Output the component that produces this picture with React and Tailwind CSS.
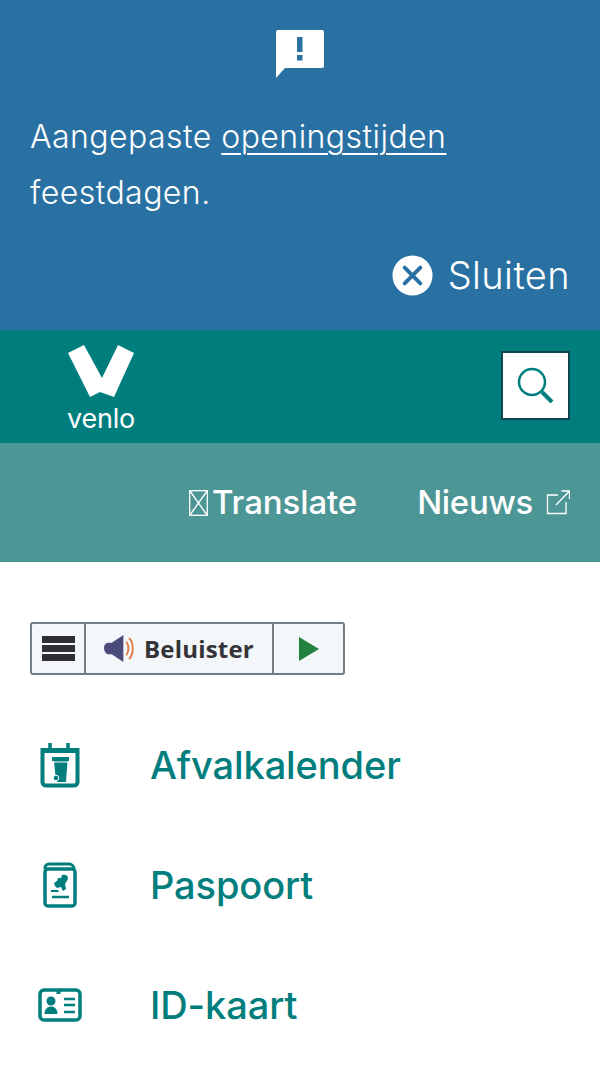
const FONT = "font-['Inter','Liberation_Sans',sans-serif]";

function AlertIcon() {
  return (
    <svg viewBox="0 0 50 50" className="w-[50px] h-[50px]" fill="none">
      <path d="M3 1H47a2 2 0 0 1 2 2V37a2 2 0 0 1-2 2H10L1 49V3a2 2 0 0 1 2-2Z" fill="#fff" />
      <rect x="22" y="8" width="5.500" height="15" fill="#2a71a3" />
      <rect x="22" y="26" width="5.500" height="5.500" fill="#2a71a3" />
    </svg>
  );
}

function CloseIcon() {
  return (
    <svg viewBox="0 0 42 42" className="w-[41px] h-[41px]">
      <circle cx="21" cy="21" r="20.500" fill="#fff" />
      <path d="M13 13 29 29M29 13 13 29" stroke="#2a71a3" strokeWidth="4" strokeLinecap="round" />
    </svg>
  );
}

function VenloLogo() {
  return (
    <svg viewBox="0 0 68 53" className="w-[68px] h-[53px]">
      <path d="M1 8 17 0 35 33 51 0 67 8 47 52 33 47 23 52Z" fill="#fff" />
    </svg>
  );
}

function SearchIcon() {
  return (
    <svg viewBox="0 0 40 40" className="w-[40px] h-[40px]" fill="none" stroke="#007e7e">
      <circle cx="16" cy="16" r="13" strokeWidth="2.500" />
      <path d="M26 26 36 36" strokeWidth="4" />
    </svg>
  );
}

function ExternalIcon() {
  return (
    <svg viewBox="0 0 24 25" className="w-[24px] h-[25px]" fill="none" stroke="#fff" strokeWidth="1.300">
      <path d="M12 5H1.500V23.500H20V12" />
      <path d="M10 15 23 1.500M15.500 1H23.500V9" />
    </svg>
  );
}

function TofuBox() {
  return (
    <svg viewBox="0 0 19 26" className="w-[19px] h-[26px] shrink-0" fill="none" stroke="#fff" strokeWidth="1.300">
      <rect x="0.700" y="0.700" width="17.600" height="24.600" />
      <path d="M1 1 18 25M18 1 1 25" />
    </svg>
  );
}

function CalendarIcon() {
  return (
    <svg viewBox="0 0 40 46" className="w-[40px] h-[46px]" fill="none">
      <path d="M2.500 8H37.500V40a3.500 3.500 0 0 1-3.500 3.500H6A3.500 3.500 0 0 1 2.500 40Z" stroke="#007e7e" strokeWidth="4" />
      <path d="M1 6H39V11H1Z" fill="#007e7e" />
      <path d="M10 1V9M28 1V9" stroke="#007e7e" strokeWidth="3.500" />
      <path d="M12 15H29V19H27.500L26 40H17L15.500 34 14 19H12Z" fill="#007e7e" />
      <path d="M13 20H28" stroke="#fff" strokeWidth="1" />
      <circle cx="16" cy="36" r="2.800" fill="#007e7e" stroke="#fff" strokeWidth="1" />
    </svg>
  );
}

function PassportIcon() {
  return (
    <svg viewBox="0 0 34 46" className="w-[34px] h-[46px]" fill="none">
      <path d="M2 7V6a4 4 0 0 1 4-4H26a5 5 0 0 1 5 5" stroke="#007e7e" strokeWidth="3" />
      <rect x="2" y="7" width="30" height="37" rx="3" stroke="#007e7e" strokeWidth="3.500" />
      <path d="M19 13c3-1 6 0 6 3 0 2-2 4-3 6l1 5-3 2-2-4-4 1-2-2-1-3 3-2 1-3 3 0Z" fill="#007e7e" />
      <path d="M8 28l7 0 1 2-8 0Z" fill="#007e7e" />
      <path d="M9 35H26" stroke="#007e7e" strokeWidth="2.500" />
    </svg>
  );
}

function IdCardIcon() {
  return (
    <svg viewBox="0 0 44 34" className="w-[44px] h-[34px]" fill="none">
      <rect x="2" y="2" width="40" height="30" rx="4" stroke="#007e7e" strokeWidth="3.500" />
      <path d="M18.500 2H22.500V6H18.500Z" fill="#007e7e" />
      <circle cx="13" cy="13" r="4.500" fill="#007e7e" />
      <path d="M6.500 26c0-5 3-7.500 6.500-7.500s6.500 2.500 6.500 7.500Z" fill="#007e7e" />
      <path d="M26 11H37M26 17H37M26 24H37" stroke="#007e7e" strokeWidth="2.500" />
    </svg>
  );
}

function SpeakerIcon() {
  return (
    <svg viewBox="0 0 34 30" className="w-[33px] h-[29px]" fill="none">
      <path d="M1 14c0-3 2-5 5-5h3L21 1V29L9 21H6c-3 0-5-3-5-7Z" fill="#4a4b78" />
      <path d="M24 8c3 4 3 10 0 14" stroke="#e07b45" strokeWidth="2" />
      <path d="M27 4c5 6 5 16 0 22" stroke="#e07b45" strokeWidth="2" />
    </svg>
  );
}

const links = [
  { label: "Afvalkalender", icon: <CalendarIcon /> },
  { label: "Paspoort", icon: <PassportIcon /> },
  { label: "ID-kaart", icon: <IdCardIcon /> },
];

export default function App() {
  return (
    <div className={`${FONT} w-[600px] h-[1065px] overflow-hidden bg-white`}>
      {/* Melding */}
      <div className="h-[330px] bg-[#2a71a3] px-[30px] pt-[29px] text-white">
        <div className="flex justify-center"><AlertIcon /></div>
        <p className="mt-[30px] text-[32px] leading-[56px] font-light tracking-[0.45px]">
          Aangepaste <a className="underline underline-offset-[5px] decoration-2">openingstijden</a>
          <br />
          feestdagen.
        </p>
        <div className="mt-[32px] flex items-center justify-end gap-[15px]">
          <CloseIcon />
          <span className="text-[38px] leading-[44px] font-light tracking-[0.4px]">Sluiten</span>
        </div>
      </div>

      {/* Header */}
      <div className="h-[113px] bg-[#007e7e] flex items-start justify-between pl-[67px] pr-[30px] pt-[15px]">
        <div className="flex flex-col items-center gap-[7px]">
          <VenloLogo />
          <span className="text-[27px] leading-[28px] text-white tracking-[-0.2px]">venlo</span>
        </div>
        <button className="w-[69px] h-[69px] mt-[6px] bg-white border-2 border-[#10474f] flex items-center justify-center">
          <SearchIcon />
        </button>
      </div>

      {/* Subnav */}
      <div className="h-[119px] bg-[#4d9696] flex items-center justify-end gap-[60px] pr-[30px] text-white text-[33px] font-medium">
        <span className="flex items-center tracking-[-0.1px]"><TofuBox /><span className="ml-[4px]">Translate</span></span>
        <span className="flex items-center gap-[13px] tracking-[-0.3px]">Nieuws <ExternalIcon /></span>
      </div>

      {/* Voorlezen */}
      <div className="pt-[60px] px-[30px]">
        <div className="inline-flex h-[53px] border-2 border-[#717c85] rounded-[3px] bg-[#f3f7fa] font-['Open_Sans',sans-serif]">
          <div className="w-[54px] flex flex-col items-center justify-center gap-[2px] border-r-2 border-[#717c85]">
            <span className="w-[33px] h-[7px] bg-[#2f2f33]" />
            <span className="w-[33px] h-[7px] bg-[#2f2f33]" />
            <span className="w-[33px] h-[7px] bg-[#2f2f33]" />
          </div>
          <div className="w-[188px] flex items-center pl-[17px] gap-[8px] border-r-2 border-[#717c85]">
            <SpeakerIcon />
            <span className="text-[24px] font-bold text-[#333338] tracking-[0.2px]">Beluister</span>
          </div>
          <div className="w-[69px] flex items-center justify-center">
            <svg viewBox="0 0 20 24" className="w-[20px] h-[24px]"><path d="M0 0 20 12 0 24Z" fill="#24803f" /></svg>
          </div>
        </div>
      </div>

      {/* Snelle links */}
      <ul className="mt-[30px]">
        {links.map((l) => (
          <li key={l.label} className="h-[120px] flex items-center pl-[30px]">
            <span className="w-[60px] flex justify-center">{l.icon}</span>
            <span className="ml-[60px] text-[38px] font-medium text-[#007e7e] tracking-[-0.1px]">{l.label}</span>
          </li>
        ))}
      </ul>
    </div>
  );
}
